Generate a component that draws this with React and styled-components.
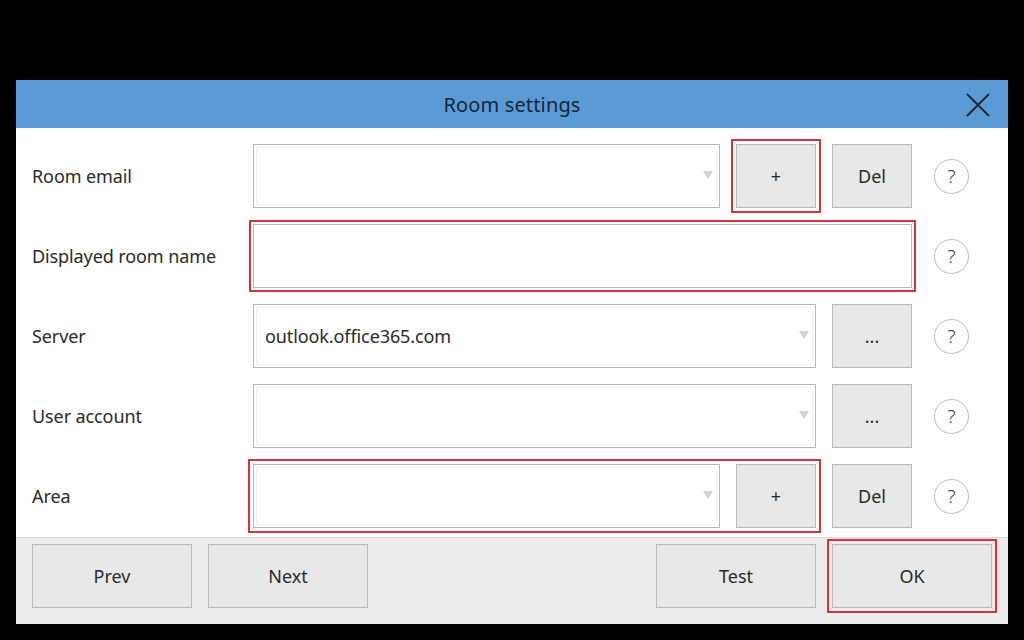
import React from 'react';
import styled, { createGlobalStyle, css } from 'styled-components';

const GlobalStyle = createGlobalStyle`
  html, body {
    margin: 0;
    padding: 0;
    background: #000000;
  }
  body {
    font-family: 'Noto Sans', 'Open Sans', sans-serif;
    color: #2a2a2a;
  }
`;

// Black page around the dialog
const Screen = styled.div`
  width: 1024px;
  height: 640px;
  padding: 80px 16px 16px;
  box-sizing: border-box;
  background: #000000;
`;

const Dialog = styled.div`
  width: 992px;
  height: 544px;
  display: flex;
  flex-direction: column;
  background: #ffffff;
`;

const Header = styled.div`
  height: 48px;
  flex-shrink: 0;
  background: #5b9bd5;
  display: flex;
  align-items: center;
  justify-content: center;
  position: relative;
`;

const Title = styled.div`
  font-size: 20px;
  color: #16263a;
  letter-spacing: 0.15px;
`;

const CloseButton = styled.button`
  position: absolute;
  right: 18px;
  top: 13px;
  width: 24px;
  height: 24px;
  padding: 0;
  border: 0;
  background: transparent;
  display: flex;
`;

const Body = styled.div`
  height: 409px;
  box-sizing: border-box;
  padding: 16px 16px 9px;
  display: flex;
  flex-direction: column;
  gap: 16px;
`;

const Row = styled.div`
  height: 64px;
  display: flex;
  align-items: center;
`;

const Label = styled.div`
  width: 221px;
  flex-shrink: 0;
  font-size: 18px;
  letter-spacing: -0.1px;
  color: #2a2a2a;
`;

const Fields = styled.div`
  width: 659px;
  height: 64px;
  display: flex;
  gap: 16px;
`;

// red focus frame drawn around a group of controls
const highlight = css`
  outline: 2px solid #d9303c;
  outline-offset: ${p => p.$offset ?? 3}px;
`;

const Group = styled.div`
  flex: 1;
  display: flex;
  gap: 16px;
  ${p => p.$marked && highlight}
`;

const Combo = styled.div`
  flex: 1;
  height: 64px;
  box-sizing: border-box;
  border: 1px solid #b9b9b9;
  box-shadow: inset 0 0 0 2px #ffffff, inset 0 0 0 3px #f1f1f1;
  background: #ffffff;
  display: flex;
  align-items: center;
  padding: 0 6px 0 11px;
  font-size: 18px;
  letter-spacing: -0.1px;
  color: #2a2a2a;
`;

const ComboText = styled.span`
  flex: 1;
`;

const Arrow = styled.span`
  width: 0;
  height: 0;
  margin-top: -2px;
  border-left: 5px solid transparent;
  border-right: 5px solid transparent;
  border-top: 8px solid #d2d2d2;
`;

const TextInput = styled.div`
  flex: 1;
  height: 64px;
  box-sizing: border-box;
  border: 1px solid #b9b9b9;
  background: #ffffff;
  ${p => p.$marked && highlight}
`;

const Button = styled.button`
  width: ${p => p.$wide ? 160 : 80}px;
  height: 64px;
  flex-shrink: 0;
  box-sizing: border-box;
  border: 1px solid #b9b9b9;
  background: #e8e8e8;
  font-family: inherit;
  font-size: 18px;
  color: #2a2a2a;
  padding: 0;
  ${p => p.$marked && highlight}
`;

const Help = styled.div`
  width: 35px;
  height: 35px;
  margin-left: 22px;
  box-sizing: border-box;
  border: 1px solid #bdbdbd;
  border-radius: 50%;
  display: flex;
  align-items: center;
  justify-content: center;
  font-size: 19px;
  font-weight: 300;
  color: #3a3a3a;
`;

const Footer = styled.div`
  flex: 1;
  background: #ececec;
  border-top: 1px solid #d6d6d6;
  padding: 6px 16px 0;
  display: flex;
  gap: 16px;
`;

const Spacer = styled.div`
  flex: 1;
`;

const CloseIcon = () => (
  <svg width="24" height="24" viewBox="0 0 24 24">
    <path d="M1 1 L23 23 M23 1 L1 23" stroke="#1a2533" strokeWidth="1.8" fill="none" />
  </svg>
);

const ComboBox = ({ value }) => (
  <Combo>
    <ComboText>{value}</ComboText>
    <Arrow />
  </Combo>
);

const App = () => {
  return (
    <>
      <GlobalStyle />
      <Screen>
        <Dialog>
          <Header>
            <Title>Room settings</Title>
            <CloseButton aria-label="Close">
              <CloseIcon />
            </CloseButton>
          </Header>

          <Body>
            <Row>
              <Label>Room email</Label>
              <Fields>
                <ComboBox />
                <Button $marked>+</Button>
                <Button>Del</Button>
              </Fields>
              <Help>?</Help>
            </Row>

            <Row>
              <Label>Displayed room name</Label>
              <Fields>
                <TextInput $marked $offset={2} />
              </Fields>
              <Help>?</Help>
            </Row>

            <Row>
              <Label>Server</Label>
              <Fields>
                <ComboBox value="outlook.office365.com" />
                <Button>...</Button>
              </Fields>
              <Help>?</Help>
            </Row>

            <Row>
              <Label>User account</Label>
              <Fields>
                <ComboBox />
                <Button>...</Button>
              </Fields>
              <Help>?</Help>
            </Row>

            <Row>
              <Label>Area</Label>
              <Fields>
                <Group $marked $offset={3}>
                  <ComboBox />
                  <Button>+</Button>
                </Group>
                <Button>Del</Button>
              </Fields>
              <Help>?</Help>
            </Row>
          </Body>

          <Footer>
            <Button $wide>Prev</Button>
            <Button $wide>Next</Button>
            <Spacer />
            <Button $wide>Test</Button>
            <Button $wide $marked>OK</Button>
          </Footer>
        </Dialog>
      </Screen>
    </>
  );
};

export default App;
